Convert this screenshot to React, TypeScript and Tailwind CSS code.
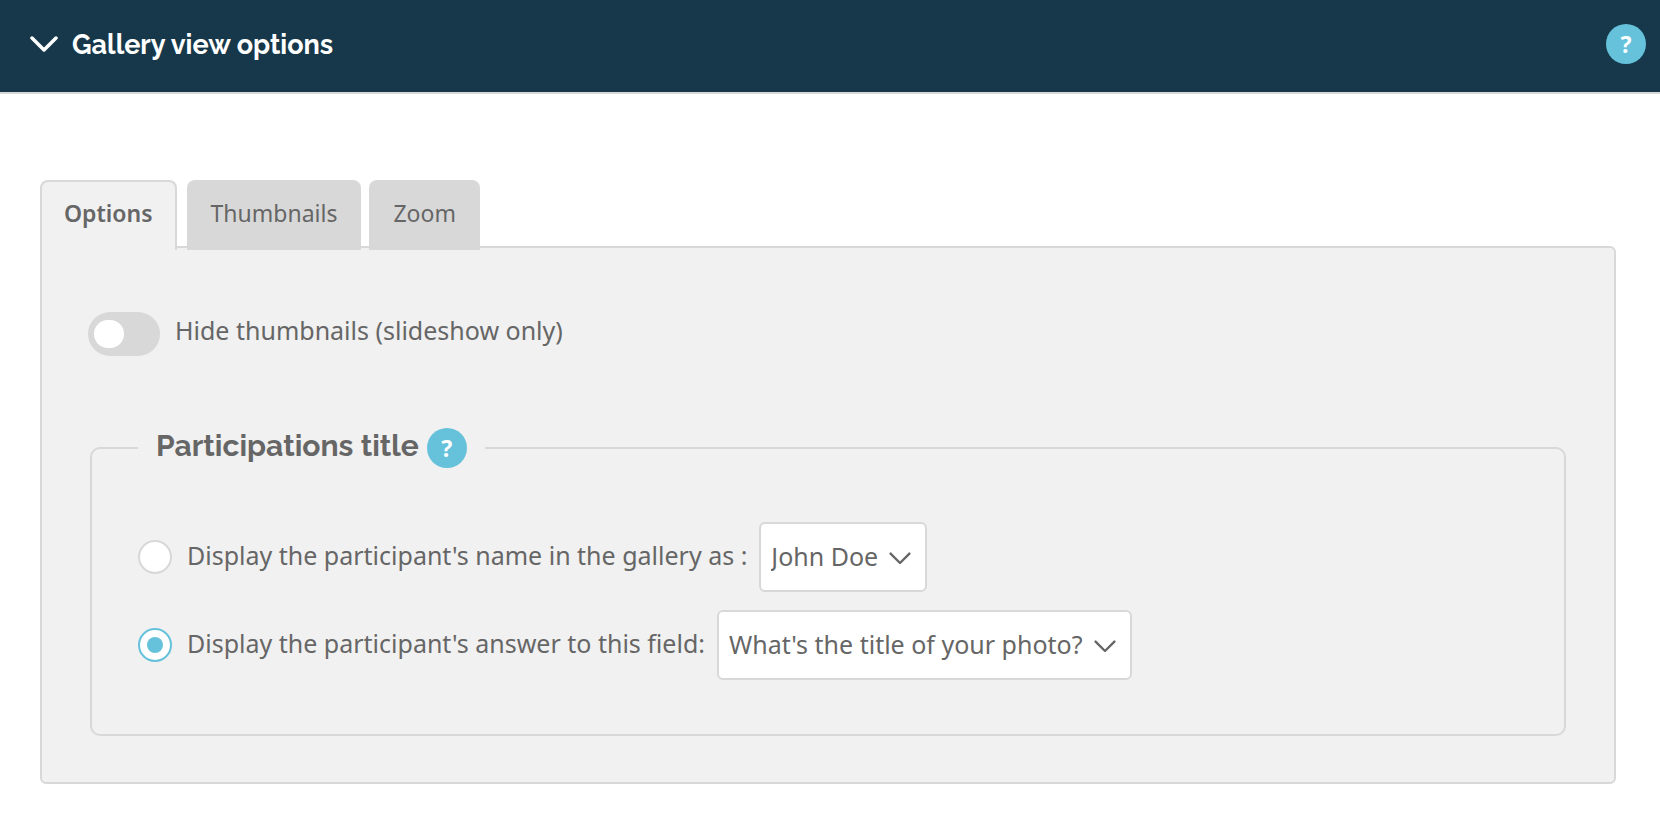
import React, { useState } from "react";

function Chevron({ className }: { className: string }) {
  return (
    <svg viewBox="0 0 28 16" fill="none" stroke="currentColor" aria-hidden="true" className={className}>
      <path d="M2 2 L14 14 L26 2" strokeLinecap="round" strokeLinejoin="round" />
    </svg>
  );
}

function HelpButton() {
  return (
    <button
      type="button"
      aria-label="Help"
      className="flex size-10 shrink-0 items-center justify-center rounded-full bg-[#66c1db] text-[23px] font-bold text-white"
    >
      ?
    </button>
  );
}

const tabs = ["Options", "Thumbnails", "Zoom"];

function Tabs() {
  const [active, setActive] = useState("Options");
  return (
    <div role="tablist" className="relative -mb-1 flex gap-2">
      {tabs.map((tab) => (
        <button
          key={tab}
          type="button"
          role="tab"
          aria-selected={tab === active}
          onClick={() => setActive(tab)}
          className={
            tab === active
              ? "mr-0.5 h-[70px] rounded-t-lg border-2 border-b-0 border-[#d8d8d8] bg-[#f1f1f1] px-[22px] pb-1.5 text-[23px] font-semibold"
              : "h-[70px] rounded-t-lg bg-[#d8d8d8] px-6 pb-1 text-[23px]"
          }
        >
          {tab}
        </button>
      ))}
    </div>
  );
}

type ChoiceProps = {
  id: string;
  label: string;
  options: string[];
  checked: boolean;
  onSelect: () => void;
};

function Choice({ id, label, options, checked, onSelect }: ChoiceProps) {
  return (
    <div className="flex items-center gap-3">
      <div className="flex items-center gap-[15px]">
        <input
          id={id}
          type="radio"
          name="participation-title"
          checked={checked}
          onChange={onSelect}
          className="grid size-[34px] shrink-0 appearance-none place-items-center rounded-full border-2 border-[#d8d8d8] bg-white before:size-4 before:rounded-full checked:border-[#66c1db] checked:before:bg-[#66c1db]"
        />
        <label htmlFor={id} className="pb-1">{label}</label>
      </div>
      <div className="grid items-center">
        <select
          aria-label={label}
          className="col-start-1 row-start-1 h-[70px] appearance-none rounded-md border-2 border-[#d8d8d8] bg-white pr-[47px] pb-0.5 pl-2.5"
        >
          {options.map((option) => (
            <option key={option}>{option}</option>
          ))}
        </select>
        <Chevron className="pointer-events-none col-start-1 row-start-1 mt-0.5 mr-4 w-[22px] justify-self-end stroke-3" />
      </div>
    </div>
  );
}

export default function App() {
  const [choice, setChoice] = useState("answer");
  return (
    <div className="min-h-screen bg-white font-['Noto_Sans',sans-serif] text-[25px] leading-9 text-[#666]">
      <header className="flex h-[94px] items-center justify-between border-b-2 border-[#d8d8d8] bg-[#16384a] pr-3.5 pb-1 pl-[30px] text-white">
        <button type="button" aria-expanded="true" className="flex items-center gap-3.5">
          <Chevron className="w-7 stroke-[3.5]" />
          <h1 className="pt-0.5 font-['Raleway','Lato',sans-serif] text-[27px] font-bold">Gallery view options</h1>
        </button>
        <HelpButton />
      </header>

      <main className="pt-[86px] pr-11 pb-10 pl-10">
        <Tabs />
        <section className="rounded-md rounded-tl-none border-2 border-[#d8d8d8] bg-[#f1f1f1] px-12 pt-16 pb-[46px]">
          <div className="-ml-0.5 flex items-center gap-[15px]">
            <input
              id="hide-thumbnails"
              type="checkbox"
              role="switch"
              className="flex h-11 w-[72px] shrink-0 appearance-none items-center rounded-full bg-[#d8d8d8] px-1.5 before:h-7 before:w-[30px] before:rounded-full before:bg-white checked:justify-end checked:bg-[#66c1db]"
            />
            <label htmlFor="hide-thumbnails" className="pb-2">
              Hide thumbnails (slideshow only)
            </label>
          </div>

          <fieldset className="mt-[72px] rounded-[10px] border-2 border-[#d8d8d8] px-[46px] pb-[54px]">
            <legend className="px-[18px]">
              <div className="flex items-center gap-2">
                <h2 className="pb-1 font-['Raleway','Lato',sans-serif] text-[30px] font-bold">Participations title</h2>
                <HelpButton />
              </div>
            </legend>
            <div className="flex flex-col gap-[18px] pt-[54px]">
              <Choice
                id="display-name"
                label="Display the participant's name in the gallery as :"
                options={["John Doe"]}
                checked={choice === "name"}
                onSelect={() => setChoice("name")}
              />
              <Choice
                id="display-answer"
                label="Display the participant's answer to this field:"
                options={["What's the title of your photo?"]}
                checked={choice === "answer"}
                onSelect={() => setChoice("answer")}
              />
            </div>
          </fieldset>
        </section>
      </main>
    </div>
  );
}
